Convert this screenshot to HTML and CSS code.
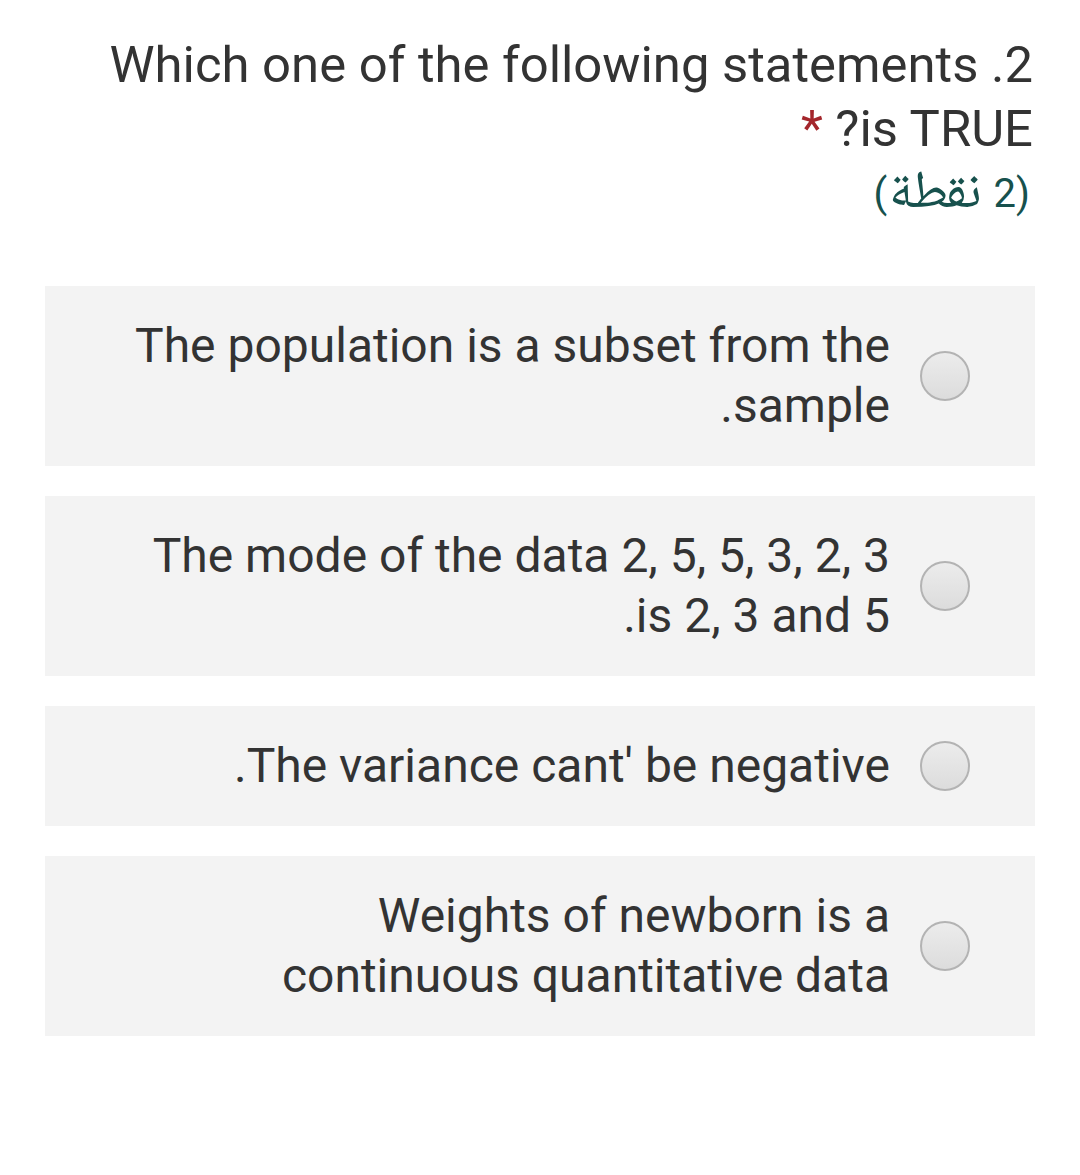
FILE: index.html
```html
<!DOCTYPE html>
<html lang="ar" dir="rtl">
<head>
<meta charset="utf-8">
<title>Question 2</title>
<link rel="stylesheet" href="styles.css">
</head>
<body>
<main class="form">
  <div class="question-title">
    <div class="title-text">2. Which one of the following statements<br>is TRUE? <span class="required">*</span></div>
    <div class="points">(2 <span class="points-word">نقطة</span>)</div>
  </div>
  <div class="options">
    <label class="option">
      <input class="radio" type="radio" name="q2">
      <span class="option-text">The population is a subset from the<br>sample.</span>
    </label>
    <label class="option">
      <input class="radio" type="radio" name="q2">
      <span class="option-text">The mode of the data 2, 5, 5, 3, 2, 3<br>is 2, 3 and 5.</span>
    </label>
    <label class="option">
      <input class="radio" type="radio" name="q2">
      <span class="option-text">The variance cant' be negative.</span>
    </label>
    <label class="option">
      <input class="radio" type="radio" name="q2">
      <span class="option-text">Weights of newborn is a<br>continuous quantitative data</span>
    </label>
  </div>
</main>
</body>
</html>
```

FILE: styles.css
```css
html, body {
  margin: 0;
  padding: 0;
  background: #ffffff;
}

body {
  font-family: Roboto, "Noto Sans", "DejaVu Sans", sans-serif;
  color: #333333;
}

.form {
  padding: 33px 45px 40px 45px;
}

.question-title {
  text-align: right;
  padding-right: 2px;
}

.title-text {
  font-size: 50.8px;
  line-height: 64px;
  color: #333333;
}

.required {
  color: #a4262c;
}

.points {
  font-family: Roboto, "Noto Naskh Arabic", "Noto Sans Arabic", "DejaVu Sans", sans-serif;
  font-size: 40px;
  line-height: 65px;
  color: #17514d;
  padding-right: 3px;
}

.points-word {
  font-size: 53px;
  line-height: 1;
  margin: 0 2px;
}

.options {
  display: flex;
  flex-direction: column;
  gap: 30px;
  margin-top: 60px;
}

.option {
  display: flex;
  align-items: center;
  gap: 30px;
  background: #f3f3f3;
  padding: 30px 65px 30px 30px;
  cursor: pointer;
}

.radio {
  appearance: none;
  -webkit-appearance: none;
  margin: 0;
  flex: 0 0 auto;
  width: 50px;
  height: 50px;
  border-radius: 50%;
  border: 2px solid #b3b3b3;
  background: linear-gradient(#ececec, #dcdcdc);
  box-sizing: border-box;
}

.option-text {
  font-size: 48px;
  line-height: 60px;
  color: #333333;
  text-align: right;
}
```
